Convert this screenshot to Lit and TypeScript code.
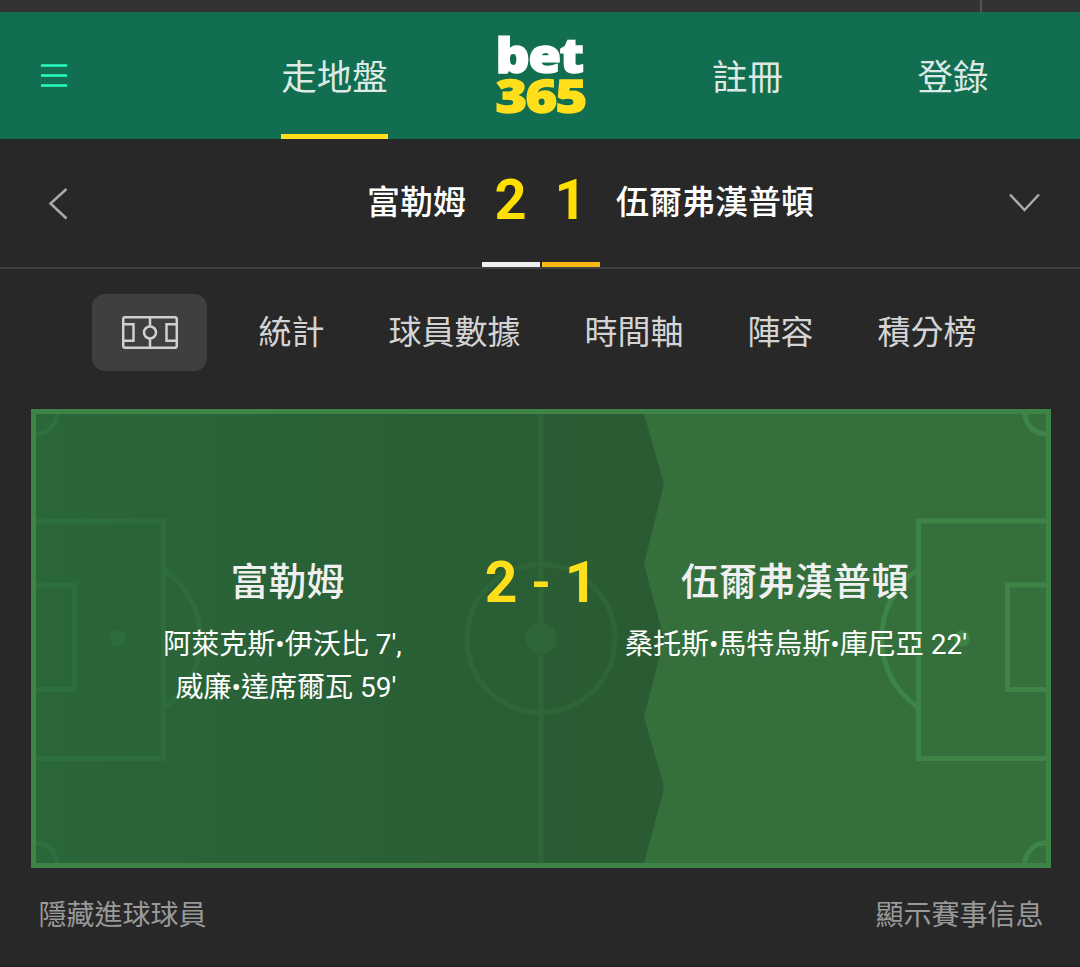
import { css, html, LitElement, svg } from 'lit';
import { customElement, property } from 'lit/decorators.js';

@customElement('match-pitch')
class MatchPitch extends LitElement {
  static styles = css`
    :host {
      display: grid;
      width: 1020px;
      height: 459px;
    }

    .field,
    .details {
      grid-area: 1 / 1;
    }

    .field {
      display: block;
    }

    .details {
      z-index: 1;
      display: grid;
      grid-template-columns: 1fr 1fr;
      grid-template-rows: 58px auto;
      align-content: start;
      padding-top: 144px;
      text-align: center;
      color: #fff;
    }

    .name {
      grid-row: 1;
      font-size: 38px;
      font-weight: 500;
      line-height: 58px;
      color: #f0f0f0;
    }

    .home {
      grid-column: 1;
      padding-left: 3px;
    }

    .away {
      grid-column: 2;
      padding-right: 2px;
    }

    .score {
      grid-row: 1;
      grid-column: 1 / 3;
      justify-self: center;
      display: grid;
      grid-template-columns: 36px 44px 36px;
      font-size: 57px;
      font-weight: 700;
      line-height: 60px;
      color: #ffdf1b;
    }

    .dash {
      font-size: 50px;
    }

    .scorers {
      grid-row: 2;
      padding-top: 12px;
      font-size: 28px;
      line-height: 43px;
    }

    .scorers div {
      white-space: pre;
    }
  `;

  @property({ attribute: false })
  home = { name: '', goals: 0, scorers: [] as string[] };

  @property({ attribute: false })
  away = { name: '', goals: 0, scorers: [] as string[] };

  private renderHalf(cornerX: number, dir: number) {
    const x = (offset: number) => cornerX + dir * offset;
    const sweep = dir > 0 ? 1 : 0;
    return svg`
      <path d="M${x(5)} 112H${x(132.5)}V349.5H${x(5)}" />
      <path d="M${x(5)} 176H${x(43.5)}V280.5H${x(5)}" />
      <path d="M${x(134)} 161.5A83 83 0 0 ${sweep} ${x(134)} 297.5" />
      <path d="M${x(26)} 5A21 21 0 0 ${sweep} ${x(5)} 25" />
      <path d="M${x(26)} 454A21 21 0 0 ${1 - sweep} ${x(5)} 434" />
      <circle cx=${x(dir > 0 ? 87 : 89)} cy="229.5" r="8" fill="#3d8446" stroke="none" />
    `;
  }

  private renderScorers(scorers: string[]) {
    const last = scorers.length - 1;
    return scorers.map((scorer, i) => html`<div>${i < last ? `${scorer}, ` : scorer}</div>`);
  }

  protected render(): unknown {
    return html`
      <svg class="field" width="1020" height="459" viewBox="0 0 1020 459">
        <defs>
          <linearGradient id="shade" x1="0" x2="1" y1="0" y2="0">
            <stop offset="0" stop-color="#215f37" />
            <stop offset="1" stop-color="#214a2c" />
          </linearGradient>
        </defs>
        <rect width="1020" height="459" fill="#35703c" />
        <g fill="none" stroke="#3d8446" stroke-width="5">
          <path d="M510 5V454" />
          <circle cx="510" cy="229.5" r="74" />
          <circle cx="510" cy="229.5" r="15.5" fill="#3d8446" stroke="none" />
          ${this.renderHalf(0, 1)} ${this.renderHalf(1020, -1)}
        </g>
        <path
          d="M5 5H613L632 71Q633 75 632 79L613 155L632 226Q633 230 632 234L613 308L632 374Q633 379 632 384L613 454H5Z"
          fill="url(#shade)"
          fill-opacity="0.56"
        />
        <rect x="2.5" y="2.5" width="1015" height="454" fill="none" stroke="#3d8446" stroke-width="5" />
      </svg>
      <div class="details">
        <div class="name home">${this.home.name}</div>
        <div class="score">
          <span>${this.home.goals}</span><span class="dash">-</span><span>${this.away.goals}</span>
        </div>
        <div class="name away">${this.away.name}</div>
        <div class="scorers">${this.renderScorers(this.home.scorers)}</div>
        <div class="scorers">${this.renderScorers(this.away.scorers)}</div>
      </div>
    `;
  }
}

@customElement('app-root')
class AppRoot extends LitElement {
  static styles = css`
    :host {
      display: flex;
      flex-direction: column;
      width: 1080px;
      height: 967px;
      overflow: hidden;
      background-color: #282828;
      font-family: Roboto, 'Noto Sans CJK TC', sans-serif;
    }

    svg {
      display: block;
    }

    .strip {
      display: flex;
      justify-content: flex-end;
      height: 12px;
      background-color: #333;
    }

    .strip-end {
      width: 98px;
      border-left: 2px solid #545454;
    }

    .header {
      display: grid;
      grid-template-columns: 231px 207px 206px 207px 204px;
      height: 127px;
      background-color: #126e51;
    }

    .menu {
      padding: 52px 0 0 41px;
    }

    .nav {
      display: flex;
      justify-content: center;
      font-size: 35.5px;
      line-height: 133px;
      color: #dce9e4;
    }

    .nav span {
      height: 122px;
      border-bottom: 5px solid transparent;
    }

    .nav .active {
      border-color: #ffdf1b;
    }

    .logo {
      padding: 20px 0 0 55px;
    }

    .logo svg {
      overflow: visible;
    }

    .logo text {
      font-family: 'Open Sans', 'Noto Sans', sans-serif;
      font-weight: 800;
      letter-spacing: -1.5px;
      stroke-width: 1.4px;
    }

    .match {
      display: grid;
      grid-template-columns: 50px 416px 16px 118px 16px 390px auto;
      height: 128px;
      border-bottom: 2px solid #404040;
      font-size: 33px;
      font-weight: 500;
      line-height: 128px;
      color: #fff;
    }

    .back {
      padding: 48px 0 0 48px;
    }

    .team-home {
      text-align: right;
    }

    .scores {
      display: flex;
      gap: 2px;
    }

    .goals {
      box-sizing: border-box;
      width: 58px;
      height: 128px;
      padding-right: 1px;
      border-bottom: 5px solid #f0f0f0;
      text-align: center;
      font-size: 56px;
      font-weight: 700;
      line-height: 123px;
      color: #ffdf00;
    }

    .goals.second {
      border-color: #fdb913;
    }

    .more {
      padding: 53px 0 0 2px;
    }

    .tabs {
      display: flex;
      gap: 64px;
      padding: 25px 0 0 92px;
      height: 115px;
      font-size: 33px;
      line-height: 78px;
      color: #d4d4d4;
    }

    .tab-pitch {
      box-sizing: border-box;
      width: 115px;
      height: 77px;
      margin-right: -12.5px;
      padding: 22px 0 0 30px;
      border-radius: 13px;
      background-color: #3f3f3f;
    }

    match-pitch {
      margin-left: 31px;
    }

    .footer {
      display: flex;
      justify-content: space-between;
      height: 98px;
      padding: 0 36.5px 0 38.5px;
      border-bottom: 1px solid #222;
      font-size: 28px;
      line-height: 96px;
      color: #999;
    }
  `;

  private home = { name: '富勒姆', goals: 2, scorers: ["阿萊克斯•伊沃比 7'", "威廉•達席爾瓦 59'"] };

  private away = { name: '伍爾弗漢普頓', goals: 1, scorers: ["桑托斯•馬特烏斯•庫尼亞 22'"] };

  private tabs = ['統計', '球員數據', '時間軸', '陣容', '積分榜'];

  private renderLogo() {
    return html`
      <svg width="100" height="90" viewBox="0 0 100 90">
        <text x="2.5" y="41" font-size="48.5" textLength="87" lengthAdjust="spacingAndGlyphs" fill="#fff" stroke="#fff">bet</text>
        <text x="2.5" y="81.3" font-size="46.5" textLength="90" lengthAdjust="spacingAndGlyphs" fill="#ffdf1b" stroke="#ffdf1b">365</text>
      </svg>
    `;
  }

  protected render(): unknown {
    return html`
      <div class="strip"><div class="strip-end"></div></div>
      <div class="header">
        <div class="menu">
          <svg width="26" height="23" viewBox="0 0 26 23">
            <path d="M0 1.5H26M0 11.5H26M0 21.5H26" stroke="#26ffbe" stroke-width="2.6" />
          </svg>
        </div>
        <div class="nav"><span class="active">走地盤</span></div>
        <div class="logo">${this.renderLogo()}</div>
        <div class="nav"><span>註冊</span></div>
        <div class="nav"><span>登錄</span></div>
      </div>
      <div class="match">
        <div class="back">
          <svg width="22" height="34" viewBox="0 0 22 34">
            <path d="M18.5 2L2.5 16.5L18.5 31.5" fill="none" stroke="#aaa" stroke-width="2.5" />
          </svg>
        </div>
        <div class="team-home">${this.home.name}</div>
        <div></div>
        <div class="scores">
          <div class="goals">${this.home.goals}</div>
          <div class="goals second">${this.away.goals}</div>
        </div>
        <div></div>
        <div>${this.away.name}</div>
        <div class="more">
          <svg width="34" height="22" viewBox="0 0 34 22">
            <path d="M2 2.5L16.5 18L31 2.5" fill="none" stroke="#aaa" stroke-width="2.5" />
          </svg>
        </div>
      </div>
      <div class="tabs">
        <div class="tab-pitch">
          <svg width="56" height="33" viewBox="0 0 56 33" fill="none" stroke="#d0d0d0" stroke-width="2.5">
            <rect x="1.2" y="1.2" width="53.6" height="30.6" rx="2" />
            <path d="M28 1V10.5M28 22.5V32M2 8.3H11.5V24.7H2M54 8.3H44.5V24.7H54" />
            <circle cx="28" cy="16.5" r="6" />
          </svg>
        </div>
        ${this.tabs.map((tab) => html`<span>${tab}</span>`)}
      </div>
      <match-pitch .home=${this.home} .away=${this.away}></match-pitch>
      <div class="footer"><span>隱藏進球球員</span><span>顯示賽事信息</span></div>
    `;
  }
}
